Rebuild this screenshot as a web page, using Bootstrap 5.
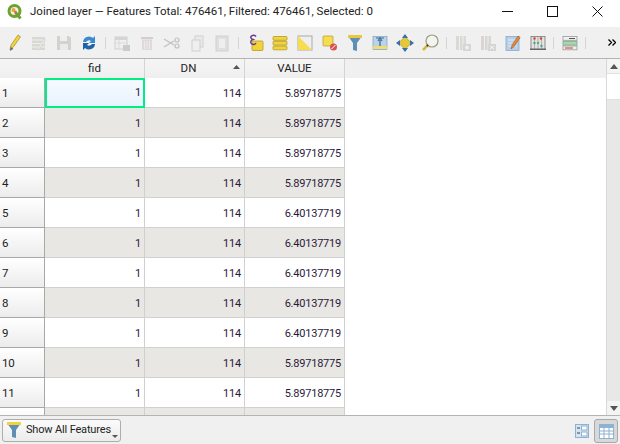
<!DOCTYPE html>
<html lang="en">
<head>
  <meta charset="UTF-8">
  <title>Joined layer</title>
  <link href="https://cdn.jsdelivr.net/npm/bootstrap@5.3.0/dist/css/bootstrap.min.css" rel="stylesheet">
  <style>
    html, body { height: 100%; }
    body { width: 620px; height: 444px; overflow: hidden; font-family: Roboto, "Open Sans", sans-serif; font-size: 11px; color: #222; background: #f0f0f0; }
    .title-bar { height: 27px; flex: none; background: #fff; padding-bottom: 4px; }
    .app-logo { margin-left: 6px; }
    .title-txt { margin-left: 7px; font-size: 11.5px; color: #222; }
    .win-btn { width: 45px; height: 23px; }
    .tool-bar { height: 31px; flex: none; padding-left: 1px; background: #f0f0f0; }
    .tool-item { width: 25px; height: 31px; flex: none; }
    .tool-sep { width: 8px; height: 31px; flex: none; }
    .tool-sep::after { content: ""; width: 1px; height: 12px; background: #d4d4d4; }
    .tool-sep.narrow { width: 7px; }
    .tool-sep.tiny { width: 4px; margin-left: 1px; }
    .tool-more { margin-left: auto; width: 12px; }
    .off-a { opacity: .3; }
    .off-b { opacity: .38; }
    .view-area { height: 358px; flex: none; border-top: 1px solid #b4b4b4; border-bottom: 1px solid #b4b4b4; background: #fff; }
    .grid-area { width: 606px; overflow: hidden; }
    .head-row { height: 19px; flex: none; background: #f0f0f0; font-size: 11.5px; }
    .head-first { width: 145px; border-right: 1px solid #d4d4d4; padding-left: 45px; padding-top: 1px; background: linear-gradient(#f5f5f5, #efefef); }
    .head-cell { width: 100px; border-right: 1px solid #d4d4d4; padding-top: 1px; background: linear-gradient(#f5f5f5, #efefef); }
    .head-cell.sorted { padding-right: 12px; }
    .sort-mark { position: absolute; right: 4px; top: 6px; }
    .data-row { height: 30px; flex: none; letter-spacing: -.02em; }
    .num-cell { width: 45px; padding: 3px 0 0 2px; border-right: 1px solid #a8a8a8; border-bottom: 1px solid #a8a8a8; background: linear-gradient(#fff, #ececec); font-size: 11.5px; }
    .val-cell { width: 100px; padding: 3px 3px 0 0; border-right: 1px solid #d0d0d0; border-bottom: 1px solid #d0d0d0; color: #2a1a3a; }
    .alt-row .val-cell { background: #e8e7e3; }
    .cur-cell { border: 2px solid #00ee85; padding: 1px 2px 0 0; background: linear-gradient(#f6faff, #e8f3fd); }
    .scroll-bar { width: 14px; border-left: 1px solid #d8d8d8; background: #e8e8e8; }
    .scroll-btn { height: 14px; background: #f4f4f4; }
    .scroll-thumb { height: 27px; background: #fff; border-top: 1px solid #e0e0e0; border-bottom: 1px solid #e0e0e0; }
    .foot-bar { height: 28px; flex: none; background: #f0f0f0; padding: 3px 2px 0 2px; }
    .show-btn { position: relative; width: 119px; height: 23px; border: 1px solid #adadad; border-radius: 3px; background: linear-gradient(#fbfbfb, #ececec); padding-left: 3px; font-size: 11px; letter-spacing: -.015em; white-space: nowrap; }
    .show-arrow { position: absolute; right: 2px; bottom: 3px; width: 6px; height: 3px; background: #555; clip-path: polygon(0 0, 100% 0, 50% 100%); }
    .view-btn { width: 24px; height: 24px; }
    .view-btn.on { border: 1px solid #a8a8a8; border-radius: 3px; background: #d8d8d8; }
  </style>
</head>
<body class="d-flex flex-column">

  <div class="title-bar d-flex align-items-center">
    <svg class="app-logo" width="17" height="17" viewBox="0 0 17 17">
      <circle cx="8.500" cy="8" r="5.500" fill="#fbeee0" stroke="#6aa32d" stroke-width="3"/>
      <path d="M9.500 9.500l5 6" stroke="#6aa32d" stroke-width="3"/>
      <circle cx="7.500" cy="7" r="2" fill="#e9a33a"/>
      <circle cx="9.500" cy="9" r="1.300" fill="#e0605a"/>
    </svg>
    <div class="title-txt flex-grow-1">Joined layer — Features Total: 476461, Filtered: 476461, Selected: 0</div>
    <div class="win-btn d-flex align-items-center justify-content-center">
      <svg width="11" height="11"><path d="M0 5.500h11" stroke="#111"/></svg>
    </div>
    <div class="win-btn d-flex align-items-center justify-content-center">
      <svg width="11" height="11"><rect x=".5" y=".5" width="10" height="10" fill="none" stroke="#111"/></svg>
    </div>
    <div class="win-btn d-flex align-items-center justify-content-center">
      <svg width="11" height="11"><path d="M.5 .5l10 10M10.500 .5l-10 10" stroke="#111"/></svg>
    </div>
  </div>

  <div class="tool-bar d-flex" id="toolBar"></div>

  <div class="view-area d-flex">
    <div class="grid-area d-flex flex-column" id="gridArea">
      <div class="head-row d-flex">
        <div class="head-first d-flex align-items-center justify-content-center">fid</div>
        <div class="head-cell sorted d-flex align-items-center justify-content-center position-relative">DN
          <svg class="sort-mark" width="7" height="4"><path d="M0 4L3.500 0L7 4z" fill="#555"/></svg>
        </div>
        <div class="head-cell d-flex align-items-center justify-content-center">VALUE</div>
      </div>
    </div>
    <div class="scroll-bar d-flex flex-column">
      <div class="scroll-btn d-flex align-items-center justify-content-center">
        <svg width="8" height="5"><path d="M0 5L4 0L8 5z" fill="#555"/></svg>
      </div>
      <div class="scroll-thumb"></div>
      <div class="flex-grow-1"></div>
      <div class="scroll-btn d-flex align-items-center justify-content-center">
        <svg width="8" height="5"><path d="M0 0L4 5L8 0z" fill="#555"/></svg>
      </div>
    </div>
  </div>

  <div class="foot-bar d-flex align-items-start">
    <div class="show-btn d-flex align-items-center">
      <svg width="16" height="19" viewBox="0 0 16 19" class="me-1">
        <path d="M1 2h14l-5 7v8l-4-1V9z" fill="#5f8fb5"/><rect x="1" y="1" width="14" height="3" fill="#f0d43a"/>
      </svg>
      Show All Features
      <span class="show-arrow"></span>
    </div>
    <div class="ms-auto d-flex align-items-center">
      <div class="view-btn d-flex align-items-center justify-content-center">
        <svg width="14" height="14" viewBox="0 0 14 14"><rect x=".5" y=".5" width="13" height="13" fill="#d5e4f1" stroke="#8eb2d2"/><path d="M2 4h3M2 9h3" stroke="#444"/><rect x="6.500" y="2" width="5.500" height="4" fill="#fff" stroke="#8eb2d2"/><rect x="6.500" y="8" width="5.500" height="4" fill="#fff" stroke="#8eb2d2"/></svg>
      </div>
      <div class="view-btn on d-flex align-items-center justify-content-center">
        <svg width="15" height="15" viewBox="0 0 15 15"><rect x=".5" y=".5" width="14" height="14" fill="#fff" stroke="#8eb2d2"/><rect x="1" y="1" width="13" height="3" fill="#8eb2d2"/><path d="M1 7h13M1 10h13M5 4v10M10 4v10" stroke="#8eb2d2"/></svg>
      </div>
    </div>
  </div>

  <script src="https://cdn.jsdelivr.net/npm/bootstrap@5.3.0/dist/js/bootstrap.bundle.min.js"></script>
  <script>
    const rows = ['5.89718775','5.89718775','5.89718775','5.89718775','6.40137719','6.40137719','6.40137719','6.40137719','6.40137719','5.89718775','5.89718775',''];
    const grid = document.getElementById('gridArea');
    rows.forEach((v, i) => {
      const r = document.createElement('div');
      r.className = 'data-row d-flex' + (i % 2 ? ' alt-row' : '');
      const al = 'd-flex align-items-center justify-content-end';
      r.innerHTML = `<div class="num-cell d-flex align-items-center">${i < 11 ? i + 1 : ''}</div>` +
        `<div class="val-cell ${al}${i === 0 ? ' cur-cell' : ''}">${i < 11 ? 1 : ''}</div>` +
        `<div class="val-cell ${al}">${i < 11 ? 114 : ''}</div>` +
        `<div class="val-cell ${al}">${v}</div>`;
      grid.appendChild(r);
    });

    const icons = [
      `<path d="M6 17l1-5 7-10 2.500 1.800-7 10z" fill="#f2d43a" stroke="#9a8a30" stroke-width=".7"/><path d="M6 18l.8-4 2.600 1.800z" fill="#666"/>`,
      `<g class="off-b"><rect x="3" y="4" width="13" height="13" fill="#b5b5a5"/><path d="M3 7h13M3 10.500h13M3 14h13" stroke="#eee"/><path d="M8 16l7-10 1.500 1-7 10z" fill="#e8e8e8" stroke="#888" stroke-width=".5"/></g>`,
      `<g class="off-a"><path d="M3 3h12l2 2v12H3z" fill="#8f8f85"/><rect x="6" y="3" width="7" height="5" fill="#eee"/><rect x="6" y="11" width="8" height="6" fill="#ddd"/></g>`,
      `<path d="M4 9a6 6 0 0 1 10-4l2-2v7h-6l2-2a3.500 3.500 0 0 0-5 1z" fill="#3a8ad0"/><path d="M16 11a6 6 0 0 1-10 4l-2 2v-7h6l-2 2a3.500 3.500 0 0 0 5-1z" fill="#1f62a8"/>`,
      'sep',
      `<g class="off-a"><rect x="3" y="4" width="12" height="12" fill="#eee" stroke="#888"/><rect x="3" y="4" width="12" height="3" fill="#999"/><path d="M3 10h12M7 7v9" stroke="#aaa"/><rect x="11" y="12" width="7" height="6" fill="#777"/></g>`,
      `<g class="off-b"><rect x="4" y="4" width="12" height="2" fill="#a89c98"/><path d="M5 6.500h10V17H5z" fill="#c4b8b4"/><path d="M7.500 8v8M10 8v8M12.500 8v8" stroke="#e8e4e2"/></g>`,
      `<g class="off-b" fill="none" stroke="#777" stroke-width="1.200"><path d="M2 6l10 6M2 14l10-6"/><circle cx="15" cy="7" r="2"/><circle cx="15" cy="13" r="2"/></g>`,
      `<g class="off-a"><rect x="8" y="3" width="8" height="11" fill="#ddd" stroke="#888"/><rect x="5" y="7" width="8" height="11" fill="#eee" stroke="#888"/></g>`,
      `<g class="off-a"><rect x="4" y="3" width="12" height="15" fill="#bbb" stroke="#888"/><rect x="7" y="6" width="6" height="9" fill="#eee"/></g>`,
      'sep',
      `<rect x="7" y="8" width="11" height="9.500" rx="1" fill="#f2d43a" stroke="#b39b2a" stroke-width=".8"/><path d="M11 3.500a3 3 0 0 0-5 0c-1 2 2 3 2 3s-3 1-2 3.500c1 2 4 2 5 0" fill="none" stroke="#6a3d8a" stroke-width="1.500"/>`,
      `<rect x="3" y="3.500" width="14" height="3.800" rx="1" fill="#f2d43a" stroke="#b39b2a" stroke-width=".8"/><rect x="3" y="8.300" width="14" height="3.800" rx="1" fill="#f2d43a" stroke="#b39b2a" stroke-width=".8"/><rect x="3" y="13" width="14" height="3.800" rx="1" fill="#f2d43a" stroke="#b39b2a" stroke-width=".8"/>`,
      `<rect x="3" y="3" width="14" height="14" fill="#efefef" stroke="#aaa"/><path d="M3 3l14 14H3z" fill="#f5dc50"/>`,
      `<rect x="3" y="3" width="10" height="10" rx="1" fill="#f5dc50" stroke="#b39b2a" stroke-width=".7"/><circle cx="13.500" cy="14" r="3.500" fill="#d9524f"/><path d="M11.500 16l4-4" stroke="#fff"/>`,
      `<path d="M3 3h14l-5 7v8l-4-1v-7z" fill="#5f8fb5"/><rect x="3" y="2" width="14" height="3" fill="#e9c840"/>`,
      `<rect x="3" y="3.500" width="14" height="13" fill="#bdd2e5" stroke="#7ba3c7" stroke-width=".7"/><rect x="3" y="13" width="14" height="3" fill="#f0dc70"/><path d="M10 13V7M8 8l2-3 2 3" fill="none" stroke="#3f6f9a" stroke-width="1.300"/><path d="M6 5h8" stroke="#3f6f9a"/>`,
      `<rect x="5.500" y="5.500" width="9" height="9" fill="#e3c93a" stroke="#9a8a30" stroke-width=".6" transform="rotate(45 10 10)"/><g fill="#3b6ea5"><path d="M10 1l3 4h-6z"/><path d="M10 19l3-4h-6z"/><path d="M1 10l4-3v6z"/><path d="M19 10l-4-3v6z"/></g>`,
      `<circle cx="12" cy="8" r="6" fill="#f4f4ee" stroke="#9a9a80" stroke-width="1.200"/><path d="M8 12l-5 5" stroke="#d6ba3a" stroke-width="2.500"/><circle cx="7.500" cy="12.500" r="1" fill="#333"/>`,
      'sep',
      `<g class="off-b"><rect x="3" y="3" width="10" height="14" fill="#b8b8ac"/><path d="M6.500 3v14M10 3v14" stroke="#eee"/><rect x="10" y="11" width="8" height="7" fill="#aaa"/><circle cx="14" cy="14.500" r="2" fill="#eee"/></g>`,
      `<g class="off-b"><rect x="3" y="3" width="10" height="14" fill="#b8a8a8"/><path d="M6.500 3v14M10 3v14" stroke="#eee"/><rect x="10" y="11" width="8" height="7" fill="#aaa"/><path d="M12 13l4 3M16 13l-4 3" stroke="#fff"/></g>`,
      `<rect x="3" y="3.500" width="13" height="14" fill="#b5cfe8" stroke="#7ba3c7" stroke-width=".7"/><path d="M5 7h9M5 10h9M5 13h9" stroke="#e3eef7"/><path d="M8 16l1-4 6-9 2.200 1.500-6 9z" fill="#e8843a" stroke="#8a5a30" stroke-width=".5"/>`,
      `<rect x="3" y="3.500" width="14" height="13" fill="#e3e3e0" stroke="#777" stroke-width=".8"/><path d="M6.500 3v13M10 3v13M13.500 3v13" stroke="#999" stroke-width=".7"/><circle cx="6.500" cy="5.500" r="1.200" fill="#c44"/><circle cx="13" cy="5.500" r="1.200" fill="#c44"/><circle cx="6.500" cy="10" r="1.200" fill="#59a"/><circle cx="10" cy="10" r="1.200" fill="#6a6"/><circle cx="13.500" cy="13" r="1.200" fill="#59a"/><rect x="2" y="15.500" width="16" height="1.500" fill="#666"/>`,
      'sep-n',
      `<rect x="3" y="3.500" width="14" height="3.800" fill="#f0f0f0" stroke="#999" stroke-width=".8"/><path d="M9 5.500h6" stroke="#555"/><rect x="3" y="8.300" width="14" height="3.800" fill="#a8d8a0" stroke="#7a9" stroke-width=".8"/><rect x="3" y="13" width="14" height="3.800" fill="#f0f0f0" stroke="#999" stroke-width=".8"/><path d="M5 15h8" stroke="#c33"/>`,
      'sep-t'
    ];
    const bar = document.getElementById('toolBar');
    icons.forEach(ic => {
      const d = document.createElement('div');
      if (ic === 'sep' || ic === 'sep-n' || ic === 'sep-t') {
        d.className = 'tool-sep d-flex align-items-center justify-content-center' + (ic === 'sep-n' ? ' narrow' : ic === 'sep-t' ? ' tiny' : '');
      } else {
        d.className = 'tool-item d-flex align-items-center justify-content-center';
        d.innerHTML = `<svg width="20" height="20" viewBox="0 0 20 20">${ic}</svg>`;
      }
      bar.appendChild(d);
    });
    const more = document.createElement('div');
    more.className = 'tool-more d-flex align-items-center';
    more.innerHTML = '<svg width="8" height="7" viewBox="0 0 8 7"><path d="M.5 .5l3 3-3 3M4.500 .5l3 3-3 3" fill="none" stroke="#000" stroke-width="1.300"/></svg>';
    bar.appendChild(more);
  </script>
</body>
</html>
